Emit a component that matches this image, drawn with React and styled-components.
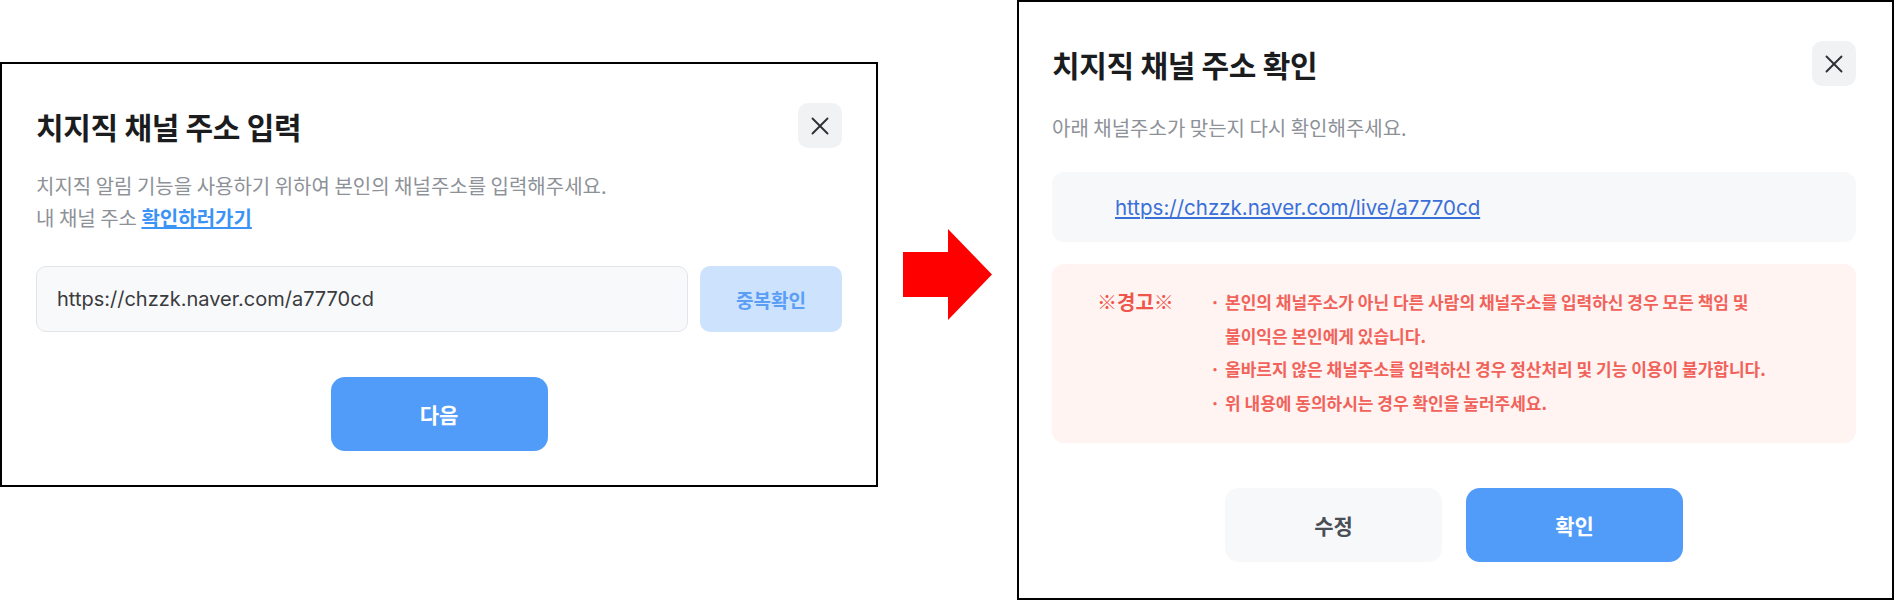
import React from 'react';
import styled, { createGlobalStyle } from 'styled-components';
import { X } from 'lucide-react';

const GlobalStyle = createGlobalStyle`
  body {
    margin: 0;
    background: #ffffff;
    font-family: Inter, "Noto Sans CJK KR", sans-serif;
  }
  * { box-sizing: border-box; }
`;

const Page = styled.div`
  display: flex;
  align-items: flex-start;
  width: 1895px;
  height: 600px;
`;

const Modal = styled.section`
  display: flex;
  flex-direction: column;
  width: ${(p) => p.$w}px;
  height: ${(p) => p.$h}px;
  margin-top: ${(p) => p.$top || 0}px;
  border: 2px solid #000;
  background: #fff;
  padding: 39px ${(p) => p.$pr || 34}px 0 ${(p) => p.$pl || 34}px;
`;

const Header = styled.div`
  display: flex;
  justify-content: space-between;
  align-items: center;
  height: 45px;
`;

const Title = styled.h2`
  margin: 0;
  font-family: "Noto Sans CJK KR", sans-serif;
  font-size: 30px;
  font-weight: 700;
  color: #1b1c1e;
  letter-spacing: -0.3px;
`;

const CloseButton = styled.button`
  display: flex;
  align-items: center;
  justify-content: center;
  width: 44px;
  height: 45px;
  padding: 0;
  border: none;
  border-radius: 10px;
  background: #f1f2f4;
  color: #2f3134;
`;

const Desc = styled.p`
  margin: ${(p) => p.$mt}px 0 0;
  font-family: "Noto Sans CJK KR", sans-serif;
  font-size: 20px;
  line-height: 32px;
  color: #8d9198;
`;

const GoLink = styled.a`
  color: #3b93f6;
  font-weight: 700;
  text-decoration: underline;
`;

const InputRow = styled.div`
  display: flex;
  gap: 12px;
  height: 66px;
  margin-top: 32px;
`;

const UrlInput = styled.input`
  flex: 1;
  height: 100%;
  padding: 0 20px;
  border: 1px solid #e2e4e7;
  border-radius: 10px;
  background: #f8f9fa;
  font-family: Inter, sans-serif;
  font-size: 20px;
  color: #3a3b3e;
  outline: none;
`;

const DupButton = styled.button`
  width: 142px;
  border: none;
  border-radius: 10px;
  background: #cde2fd;
  color: #5a9ef6;
  font-family: "Noto Sans CJK KR", sans-serif;
  font-size: 19px;
  font-weight: 700;
`;

const ActionButton = styled.button`
  width: 217px;
  height: 74px;
  border: none;
  border-radius: 14px;
  background: ${(p) => (p.$primary ? '#519cf9' : '#f7f8fa')};
  color: ${(p) => (p.$primary ? '#ffffff' : '#4a4e55')};
  font-family: "Noto Sans CJK KR", sans-serif;
  font-size: 21px;
  font-weight: 700;
`;

const ButtonRow = styled.div`
  display: flex;
  justify-content: center;
  gap: 24px;
  margin-top: 45px;
`;

const ArrowWrap = styled.div`
  margin: 229px 25px 0;
  width: 89px;
  height: 91px;
`;

const UrlBox = styled.div`
  display: flex;
  align-items: center;
  height: 70px;
  margin-top: 28px;
  padding-left: 63px;
  border-radius: 12px;
  background: #f7f8fa;
`;

const UrlLink = styled.a`
  font-family: Inter, sans-serif;
  font-size: 20.5px;
  color: #3b6fd8;
  text-decoration: underline;
`;

const WarnBox = styled.div`
  display: flex;
  height: 179px;
  margin-top: 22px;
  padding: 21px 0 0 45px;
  border-radius: 12px;
  background: #fff4f2;
  font-family: "Noto Sans CJK KR", sans-serif;
  color: #f1625a;
`;

const WarnLabel = styled.div`
  width: 76px;
  font-size: 20px;
  font-weight: 700;
  line-height: 34px;
  color: #f0554c;
  white-space: nowrap;
`;

const WarnList = styled.ul`
  margin: 0 0 0 37px;
  padding: 0;
  list-style: none;
`;

const WarnItem = styled.li`
  position: relative;
  padding-left: 15px;
  font-size: 17px;
  font-weight: 600;
  line-height: 33.7px;
  white-space: nowrap;
  &::before {
    content: '·';
    position: absolute;
    left: 0;
    top: 0;
  }
`;

function Arrow() {
  return (
    <svg width="89" height="91" viewBox="0 0 89 91">
      <polygon points="0,23 45,23 45,0 89,45.5 45,91 45,68 0,68" fill="#ff0000" />
    </svg>
  );
}

export default function App() {
  return (
    <>
      <GlobalStyle />
      <Page>
        <Modal $w={878} $h={425} $top={62}>
          <Header>
            <Title>치지직 채널 주소 입력</Title>
            <CloseButton aria-label="닫기">
              <X size={30} strokeWidth={1.5} />
            </CloseButton>
          </Header>
          <Desc $mt={22}>
            치지직 알림 기능을 사용하기 위하여 본인의 채널주소를 입력해주세요.
            <br />
            내 채널 주소 <GoLink>확인하러가기</GoLink>
          </Desc>
          <InputRow>
            <UrlInput defaultValue="https://chzzk.naver.com/a7770cd" readOnly />
            <DupButton>중복확인</DupButton>
          </InputRow>
          <ButtonRow>
            <ActionButton $primary>다음</ActionButton>
          </ButtonRow>
        </Modal>

        <ArrowWrap>
          <Arrow />
        </ArrowWrap>

        <Modal $w={877} $h={600} $pl={33} $pr={36}>
          <Header>
            <Title>치지직 채널 주소 확인</Title>
            <CloseButton aria-label="닫기">
              <X size={30} strokeWidth={1.5} />
            </CloseButton>
          </Header>
          <Desc $mt={26}>아래 채널주소가 맞는지 다시 확인해주세요.</Desc>
          <UrlBox>
            <UrlLink>https://chzzk.naver.com/live/a7770cd</UrlLink>
          </UrlBox>
          <WarnBox>
            <WarnLabel>※경고※</WarnLabel>
            <WarnList>
              <WarnItem>
                본인의 채널주소가 아닌 다른 사람의 채널주소를 입력하신 경우 모든 책임 및
                <br />
                불이익은 본인에게 있습니다.
              </WarnItem>
              <WarnItem>올바르지 않은 채널주소를 입력하신 경우 정산처리 및 기능 이용이 불가합니다.</WarnItem>
              <WarnItem>위 내용에 동의하시는 경우 확인을 눌러주세요.</WarnItem>
            </WarnList>
          </WarnBox>
          <ButtonRow>
            <ActionButton>수정</ActionButton>
            <ActionButton $primary>확인</ActionButton>
          </ButtonRow>
        </Modal>
      </Page>
    </>
  );
}
